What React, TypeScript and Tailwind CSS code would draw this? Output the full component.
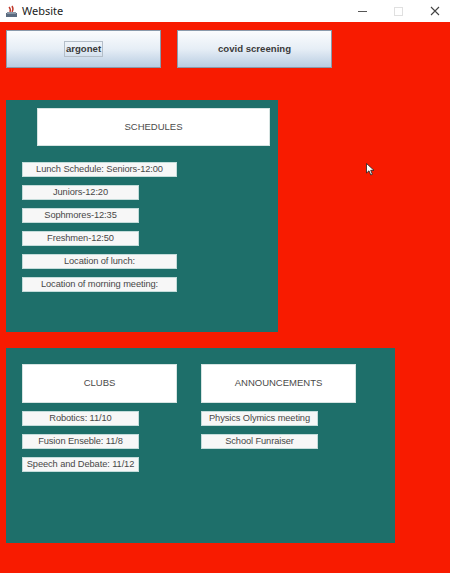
import React from 'react';

const schedules = [
  { text: 'Lunch Schedule: Seniors-12:00', wide: true },
  { text: 'Juniors-12:20', wide: false },
  { text: 'Sophmores-12:35', wide: false },
  { text: 'Freshmen-12:50', wide: false },
  { text: 'Location of lunch:', wide: true },
  { text: 'Location of morning meeting:', wide: true },
];

const clubs = ['Robotics: 11/10', 'Fusion Enseble: 11/8', 'Speech and Debate: 11/12'];
const announcements = ['Physics Olymics meeting', 'School Funraiser'];

function Label({ text, className = 'w-[117px]' }: { text: string; className?: string }) {
  return (
    <div
      className={`${className} flex h-[15px] items-center justify-center border border-[#c4dcda] bg-[#f7f7f7] text-[9.3px] leading-none tracking-[-0.1px] text-[#474747] whitespace-nowrap`}
    >
      {text}
    </div>
  );
}

function HeaderBox({ text, className }: { text: string; className: string }) {
  return (
    <div
      className={`${className} flex items-center justify-center border border-[#d6e4e2] bg-white text-[9.5px] text-[#4a4a4a]`}
    >
      {text}
    </div>
  );
}

function JButton({ text, focused }: { text: string; focused?: boolean }) {
  return (
    <button className="flex h-[38px] w-[155px] items-center justify-center border border-[#8a9aab] bg-gradient-to-b from-[#fbfcfd] via-[#e6eef6] to-[#b9cde2] text-[9.6px] font-bold text-[#3a3a3a]">
      <span className={focused ? 'border border-[#b4bec8] px-[1px]' : ''}>{text}</span>
    </button>
  );
}

export default function App() {
  return (
    <div
      className="relative flex h-[573px] w-[450px] flex-col overflow-hidden bg-[#f81b00]"
      style={{ fontFamily: '"Liberation Sans", Arial, sans-serif' }}
    >
      {/* title bar */}
      <div className="flex h-[22px] items-center bg-white pl-[5px] pr-[10px]">
        <svg width="13" height="13" viewBox="0 0 13 13">
          <rect x="1" y="8" width="11" height="4" fill="#5a6b80" />
          <path d="M4 2 Q6 4 5 7 M7 1 Q9 4 7 7" stroke="#c0392b" strokeWidth="1.4" fill="none" />
          <rect x="2" y="7" width="9" height="2" fill="#8a98a8" />
        </svg>
        <span className="ml-[4px] text-[11px] text-[#222]" style={{ fontFamily: '"Noto Sans", sans-serif' }}>
          Website
        </span>
        <div className="ml-auto flex items-center gap-[27px] text-[#444]">
          <div className="h-[1px] w-[9px] bg-[#555]" />
          <div className="h-[9px] w-[9px] border border-[#e0e0e0]" />
          <svg width="10" height="10" viewBox="0 0 10 10">
            <path d="M1 1 L9 9 M9 1 L1 9" stroke="#444" strokeWidth="1.1" />
          </svg>
        </div>
      </div>

      {/* top buttons */}
      <div className="ml-[6px] mt-[8px] flex gap-[16px]">
        <JButton text="argonet" focused />
        <JButton text="covid screening" />
      </div>

      {/* schedules panel */}
      <div className="ml-[6px] mt-[32px] flex h-[232px] w-[272px] flex-col bg-[#1e6f6a] pl-[16px] pt-[8px]">
        <HeaderBox text="SCHEDULES" className="ml-[15px] h-[38px] w-[233px]" />
        <div className="mt-[16px] flex flex-col gap-[8px]">
          {schedules.map((s) => (
            <Label key={s.text} text={s.text} className={s.wide ? 'w-[155px]' : 'w-[117px]'} />
          ))}
        </div>
      </div>

      {/* clubs + announcements panel */}
      <div className="ml-[6px] mt-[16px] flex h-[195px] w-[389px] gap-[24px] bg-[#1e6f6a] pl-[16px] pt-[16px]">
        <div className="flex flex-col">
          <HeaderBox text="CLUBS" className="h-[39px] w-[155px]" />
          <div className="mt-[8px] flex flex-col gap-[8px]">
            {clubs.map((c) => (
              <Label key={c} text={c} />
            ))}
          </div>
        </div>
        <div className="flex flex-col">
          <HeaderBox text="ANNOUNCEMENTS" className="h-[39px] w-[155px]" />
          <div className="mt-[8px] flex flex-col gap-[8px]">
            {announcements.map((a) => (
              <Label key={a} text={a} />
            ))}
          </div>
        </div>
      </div>

      {/* mouse pointer */}
      <svg className="absolute left-[366px] top-[163px]" width="9" height="13" viewBox="0 0 9 13">
        <path d="M0.5 0.5 L0.5 10 L3 7.8 L4.8 12 L6.4 11.3 L4.7 7.3 L8 7.3 Z" fill="#fff" stroke="#222" strokeWidth="0.8" />
      </svg>
    </div>
  );
}
